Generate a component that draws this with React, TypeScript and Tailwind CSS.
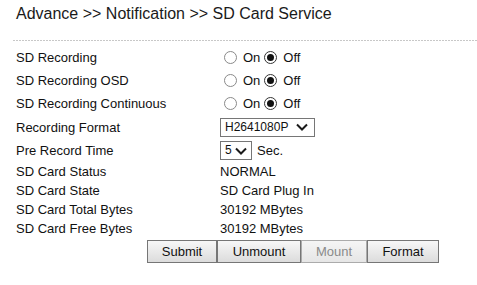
import React from 'react';

const font = "font-['Liberation_Sans',Arial,sans-serif]";

function Radio({ checked }: { checked?: boolean }) {
  return (
    <span
      className={
        'inline-flex items-center justify-center w-[13px] h-[13px] rounded-full border bg-white ' +
        (checked ? 'border-[#333333]' : 'border-[#8a8a8a]')
      }
    >
      {checked && <span className="w-[7px] h-[7px] rounded-full bg-[#111111]" />}
    </span>
  );
}

function OnOff() {
  return (
    <div className="flex items-center">
      <span className="ml-[4px] flex"><Radio /></span>
      <span className="ml-[6px]">On</span>
      <span className="ml-[4px] flex"><Radio checked /></span>
      <span className="ml-[6px]">Off</span>
    </div>
  );
}

function Chevron() {
  return (
    <svg width="12" height="8" viewBox="0 0 12 8" className="shrink-0">
      <path d="M1 1.5 L6 6.5 L11 1.5" fill="none" stroke="#1a1a1a" strokeWidth="2" />
    </svg>
  );
}

function Select({ value, width, pr }: { value: string; width: string; pr: string }) {
  return (
    <div className={'flex items-center justify-between h-[19px] border border-[#767676] bg-white pl-[4px] text-[12px] ' + width + ' ' + pr}>
      <span>{value}</span>
      <Chevron />
    </div>
  );
}

function Row({ label, h, children }: { label: string; h: string; children: React.ReactNode }) {
  return (
    <div className={'flex items-center pl-4 ' + h}>
      <div className="w-[204px]">{label}</div>
      <div className="flex items-center">{children}</div>
    </div>
  );
}

const btn = 'h-[23px] flex items-center justify-center border';
const btnOn = btn + ' border-[#767676] bg-gradient-to-b from-[#f7f7f7] to-[#dcdcdc] text-[#111111]';
const btnOff = btn + ' border-[#ababab] bg-gradient-to-b from-[#f5f5f5] to-[#e6e6e6] text-[#8a8a8a]';

export default function App() {
  return (
    <div className={`w-[477px] h-[285px] bg-white text-[13px] leading-[15px] text-[#111111] ${font}`}>
      {/* Breadcrumb title */}
      <div className="pl-4 pt-[5px] text-[16px] leading-[18px] text-[#1a1a1a]">
        Advance &gt;&gt; Notification &gt;&gt; SD Card Service
      </div>
      <div className="ml-[13px] mt-[17px] h-px bg-[repeating-linear-gradient(90deg,#c8c8c8_0px,#c8c8c8_2px,transparent_2px,transparent_3px)]" />

      {/* Settings table */}
      <div className="mt-[5px]">
        <Row label="SD Recording" h="h-[23px]"><OnOff /></Row>
        <Row label="SD Recording OSD" h="h-[23px]"><OnOff /></Row>
        <Row label="SD Recording Continuous" h="h-[23px]"><OnOff /></Row>
        <Row label="Recording Format" h="h-[24px]">
          <Select value="H2641080P" width="w-[95px]" pr="pr-[6px]" />
        </Row>
        <Row label="Pre Record Time" h="h-[23px]">
          <Select value="5" width="w-[32px]" pr="pr-[4px]" />
          <span className="ml-[5px]">Sec.</span>
        </Row>
        <Row label="SD Card Status" h="h-[19px]">NORMAL</Row>
        <Row label="SD Card State" h="h-[19px]">SD Card Plug In</Row>
        <Row label="SD Card Total Bytes" h="h-[19px]">30192 MBytes</Row>
        <Row label="SD Card Free Bytes" h="h-[19px]">30192 MBytes</Row>
      </div>

      {/* Actions */}
      <div className="flex ml-[147px] mt-[2px]">
        <button className={btnOn + ' w-[70px]'}>Submit</button>
        <button className={btnOn + ' w-[84px]'}>Unmount</button>
        <button className={btnOff + ' w-[66px]'} disabled>Mount</button>
        <button className={btnOn + ' w-[72px]'}>Format</button>
      </div>
    </div>
  );
}
